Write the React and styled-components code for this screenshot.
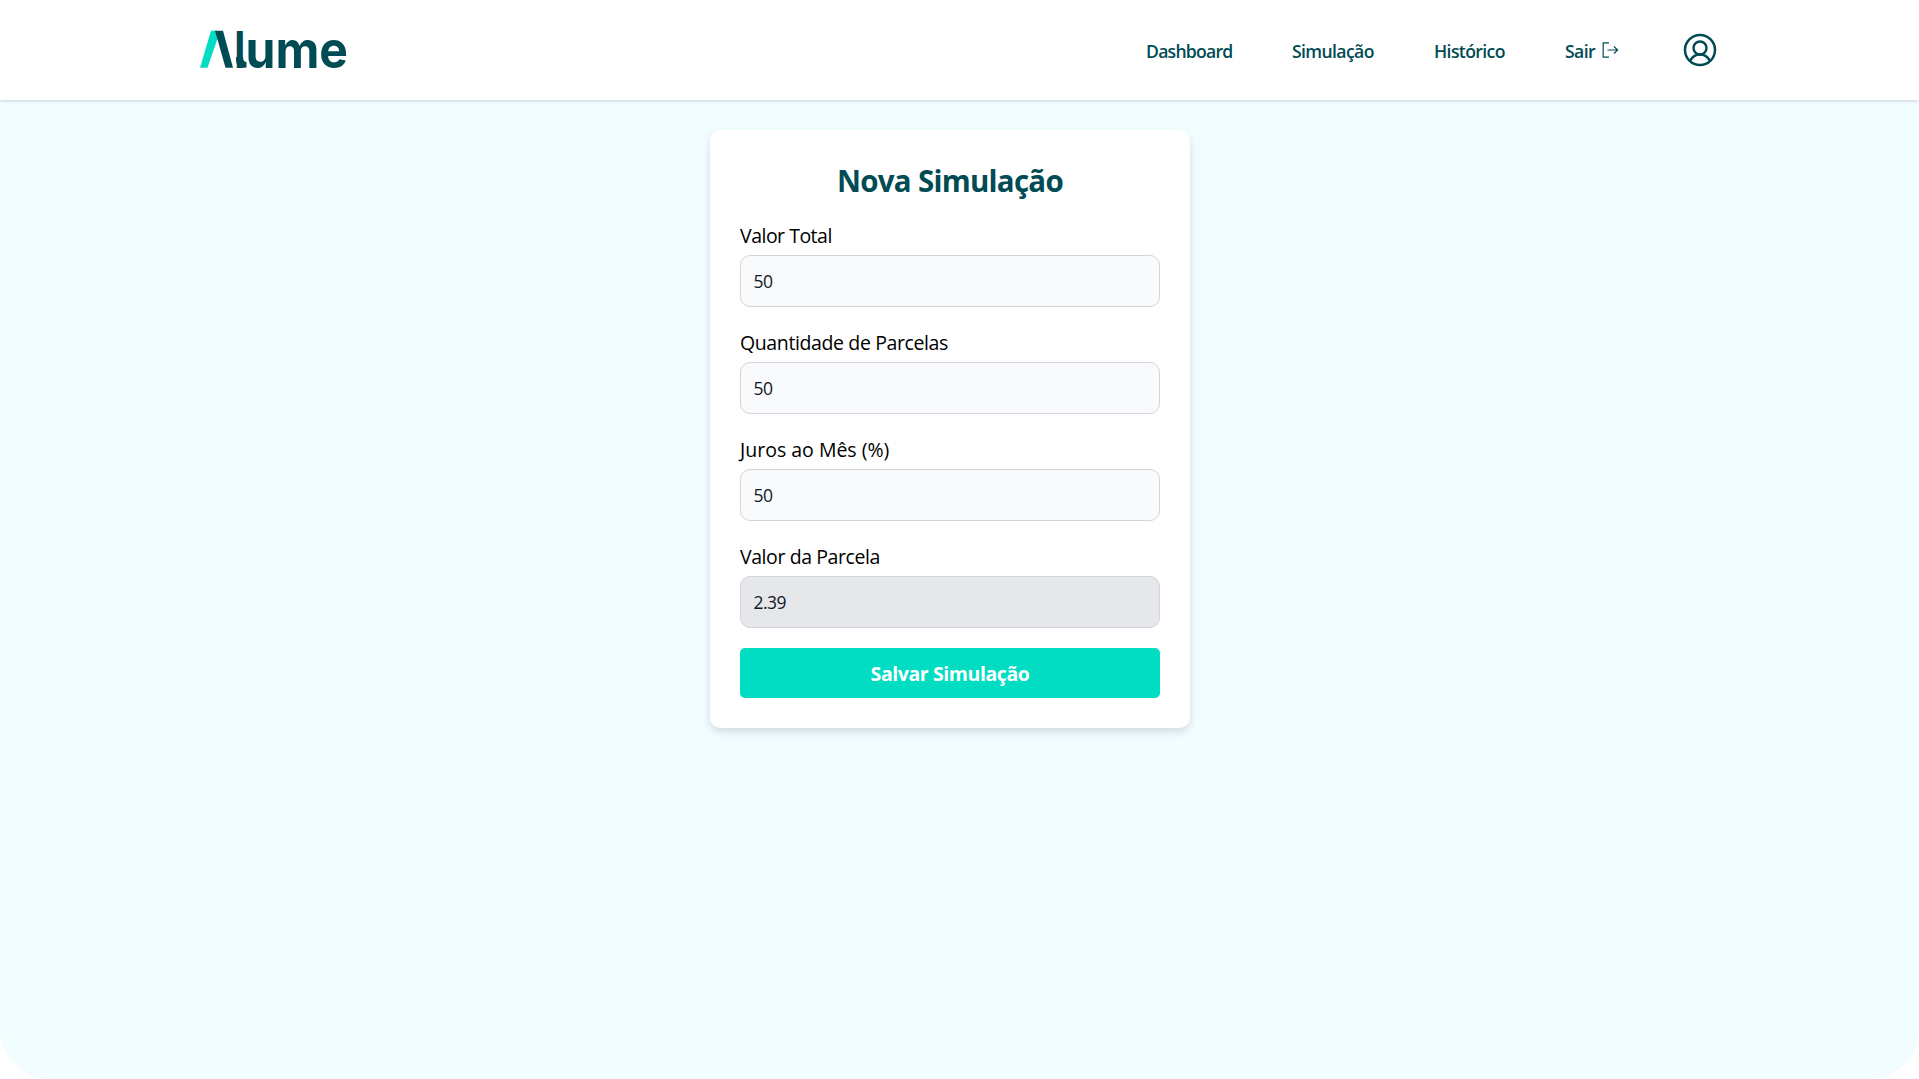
import React, { useState } from "react";
import styled, { createGlobalStyle } from "styled-components";

const GlobalStyle = createGlobalStyle`
  * { box-sizing: border-box; }
  body {
    margin: 0;
    background: #fff;
    font-family: "Segoe UI", "Open Sans", "Noto Sans", sans-serif;
    overflow: hidden;
  }
`;

const Page = styled.div`
  display: flex;
  flex-direction: column;
  height: 100vh;
`;

const Header = styled.header`
  z-index: 1;
  flex: none;
  display: flex;
  align-items: center;
  justify-content: space-between;
  height: 100px;
  padding: 0 202px 0 200px;
  background: #fff;
  box-shadow: 0 1px 3px rgba(0, 0, 0, 0.18);
`;

const Logo = styled.svg`
  display: block;
  width: 170px;
  height: 80px;
  overflow: visible;
`;

const Nav = styled.nav`
  display: flex;
  align-items: center;
  height: 100%;
`;

const NavLink = styled.a`
  display: flex;
  align-items: center;
  gap: 7px;
  width: ${(p) => p.$width}px;
  margin-right: ${(p) => p.$gap || 60}px;
  padding-top: 2px;
  color: #004b54;
  font-size: 17.6px;
  font-weight: 600;
  line-height: 24px;
  letter-spacing: ${(p) => p.$tracking}px;
  white-space: nowrap;
`;

const ExitIcon = styled.svg`
  flex: none;
  width: 17px;
  height: 16px;
  margin-top: -3px;
`;

const Avatar = styled.svg`
  display: block;
  width: 34px;
  height: 34px;
`;

const Main = styled.main`
  flex: 1;
  display: flex;
  justify-content: center;
  align-items: flex-start;
  padding: 30px 19px 0 0;
  background: #f1fdff;
  border-radius: 0 0 50px 50px;
`;

const Card = styled.form`
  display: flex;
  flex-direction: column;
  width: 480px;
  height: 598px;
  padding: 29px 30px 30px;
  background: #fff;
  border-radius: 10px;
  box-shadow: 0 4px 8px rgba(0, 0, 0, 0.13);
`;

const Title = styled.h1`
  margin: 0 0 18px;
  color: #004b54;
  font-size: 29.5px;
  font-weight: 700;
  line-height: 43px;
  letter-spacing: -0.73px;
  text-align: center;
`;

const Field = styled.label`
  display: flex;
  flex-direction: column;
  height: 87px;
  margin-bottom: 20px;
`;

const Label = styled.span`
  height: 35px;
  padding-top: 1px;
  color: #000;
  font-size: 19.5px;
  line-height: 30px;
  letter-spacing: ${(p) => p.$tracking}px;
`;

const Input = styled.input`
  width: 100%;
  height: 52px;
  padding: 0 12.5px;
  border: 1px solid #d1d5db;
  border-radius: 10px;
  background: ${(p) => (p.readOnly ? "#e5e7eb" : "#f9fafb")};
  color: #111827;
  font-family: inherit;
  font-size: 17.5px;
  letter-spacing: -0.55px;
  outline: none;
`;

const SaveButton = styled.button`
  height: 50px;
  padding: 0;
  border: 0;
  border-radius: 5px;
  background: #00ddc2;
  color: #fff;
  font-family: inherit;
  font-size: 19.5px;
  font-weight: 700;
  letter-spacing: -0.42px;
`;

const fields = [
  { label: "Valor Total", value: "50", tracking: -0.5 },
  { label: "Quantidade de Parcelas", value: "50", tracking: -0.38 },
  { label: "Juros ao Mês (%)", value: "50", tracking: 0 },
  { label: "Valor da Parcela", value: "2.39", tracking: -0.42, readOnly: true },
];

function AlumeLogo() {
  return (
    <Logo viewBox="0 -20 170 80" aria-label="Alume">
      <path d="M11 .7h6l1.500 5L7.500 37.700H0z" fill="#00ddc2" />
      <path d="M15 .7h8L33 37.700h-7.500z" fill="#004b54" />
      <path d="M36 27h7q0 5 3.500 5v5.600q-10.500 1.500-10.500-7.600z" fill="#004b54" />
      <text x="34.200" y="37.700" textLength="11" lengthAdjust="spacingAndGlyphs" fill="#004b54" fontFamily="Inter, sans-serif" fontSize="51" fontWeight="700">l</text>
      <text x="45.500" y="37.700" textLength="102.500" lengthAdjust="spacingAndGlyphs" fill="#004b54" fontFamily="Inter, sans-serif" fontSize="51" fontWeight="700">ume</text>
    </Logo>
  );
}

export default function App() {
  const [values, setValues] = useState(fields.map((f) => f.value));
  const update = (i, v) => setValues(values.map((old, n) => (n === i ? v : old)));

  return (
    <Page>
      <GlobalStyle />
      <Header>
        <AlumeLogo />
        <Nav>
          <NavLink $width={86} $tracking={-0.76}>Dashboard</NavLink>
          <NavLink $width={82} $tracking={-0.62}>Simulação</NavLink>
          <NavLink $width={71} $tracking={-0.62}>Histórico</NavLink>
          <NavLink $width={54} $gap={64} $tracking={-0.6}>
            Sair
            <ExitIcon viewBox="0 0 17 16" fill="none" stroke="#004b54" strokeWidth="1.2">
              <path d="M7 .8H1.200v14.400H7M5.500 8h10M12 4.500 15.600 8 12 11.500" />
            </ExitIcon>
          </NavLink>
          <Avatar viewBox="0 0 34 34" fill="none" stroke="#004b54" strokeWidth="2.500">
            <circle cx="17" cy="17" r="15" />
            <circle cx="17" cy="15" r="6.500" />
            <path d="M7 28c2-4 5.500-6.500 10-6.500S25 24 27 28" />
          </Avatar>
        </Nav>
      </Header>
      <Main>
        <Card onSubmit={(e) => e.preventDefault()}>
          <Title>Nova Simulação</Title>
          {fields.map((f, i) => (
            <Field key={f.label}>
              <Label $tracking={f.tracking}>{f.label}</Label>
              <Input
                value={values[i]}
                readOnly={f.readOnly}
                onChange={(e) => update(i, e.target.value)}
              />
            </Field>
          ))}
          <SaveButton type="submit">Salvar Simulação</SaveButton>
        </Card>
      </Main>
    </Page>
  );
}
